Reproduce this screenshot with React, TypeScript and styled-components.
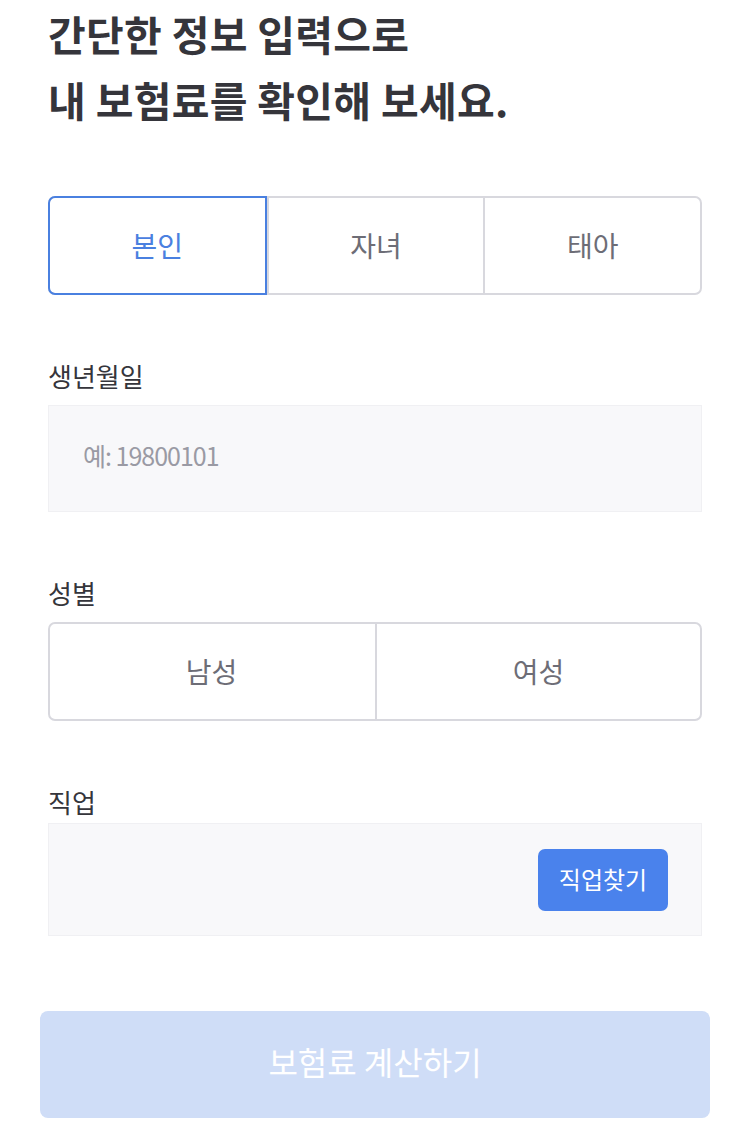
import React, { useState } from "react";
import styled, { createGlobalStyle } from "styled-components";

const Global = createGlobalStyle`
  html, body { margin: 0; padding: 0; background: #ffffff; }
  body { font-family: "Noto Sans CJK KR", "Noto Sans", sans-serif; }
  * { box-sizing: border-box; }
`;

const Page = styled.div`
  width: 750px;
  padding: 0 48px 0 48px;
  display: flex;
  flex-direction: column;
`;

const Title = styled.h1`
  margin: 0;
  padding-top: 0;
  font-size: 41px;
  font-weight: 700;
  line-height: 66px;
  color: #35353b;
  letter-spacing: 0.3px;
`;

const Segmented = styled.div<{ $cols: number; $mt: number }>`
  margin-top: ${(p) => p.$mt}px;
  display: grid;
  grid-template-columns: repeat(${(p) => p.$cols}, 1fr);
  height: 99px;
  border: 2px solid #d8d8de;
  border-radius: 7px;
`;

const SegButton = styled.button<{ $active?: boolean }>`
  margin: -2px 0;
  border: none;
  border-left: 2px solid #d8d8de;
  background: transparent;
  font-family: inherit;
  font-size: 28px;
  color: #6d6d76;
  display: flex;
  align-items: center;
  justify-content: center;
  padding: 0 0 2px;
  &:first-child {
    border-left: none;
    margin-left: -2px;
    border-radius: 7px 0 0 7px;
  }
  ${(p) =>
    p.$active &&
    `
    color: #4a80e0;
    border: 2px solid #4a80e0 !important;
    border-radius: 7px 0 0 7px;
  `}
`;

const Label = styled.div`
  margin-top: 63px;
  margin-bottom: 11px;
  font-size: 26px;
  line-height: 36px;
  color: #35353b;
`;

const InputBox = styled.div`
  height: 107px;
  background: #f8f8fa;
  border: 1px solid #f0f0f3;
  display: flex;
  align-items: center;
  padding: 0 0 8px 34px;
  font-size: 25px;
  color: #9a9aa4;
  letter-spacing: -1px;
`;

const JobBox = styled.div`
  margin-top: -8px;
  height: 113px;
  background: #f8f8fa;
  border: 1px solid #f0f0f3;
  display: flex;
  align-items: center;
  justify-content: flex-end;
  padding-right: 33px;
`;

const SmallButton = styled.button`
  width: 130px;
  height: 62px;
  border: none;
  border-radius: 7px;
  background: #4a82ec;
  color: #ffffff;
  font-family: inherit;
  font-size: 24px;
  padding: 0 0 3px;
`;

const Submit = styled.button`
  margin: 75px -8px 0 -8px;
  height: 107px;
  border: none;
  border-radius: 8px;
  background: #cfddf7;
  color: #ffffff;
  font-family: inherit;
  font-size: 32px;
  padding: 0 0 8px;
`;

export default function App() {
  const [who, setWho] = useState(0);
  return (
    <>
      <Global />
      <Page>
        <Title>
          간단한 정보 입력으로
          <br />
          내 보험료를 확인해 보세요.
        </Title>
        <Segmented $cols={3} $mt={64}>
          {["본인", "자녀", "태아"].map((t, i) => (
            <SegButton key={t} $active={who === i} onClick={() => setWho(i)}>
              {t}
            </SegButton>
          ))}
        </Segmented>
        <Label>생년월일</Label>
        <InputBox>예: 19800101</InputBox>
        <Label>성별</Label>
        <Segmented $cols={2} $mt={0}>
          <SegButton>남성</SegButton>
          <SegButton>여성</SegButton>
        </Segmented>
        <Label>직업</Label>
        <JobBox>
          <SmallButton>직업찾기</SmallButton>
        </JobBox>
        <Submit>보험료 계산하기</Submit>
      </Page>
    </>
  );
}
